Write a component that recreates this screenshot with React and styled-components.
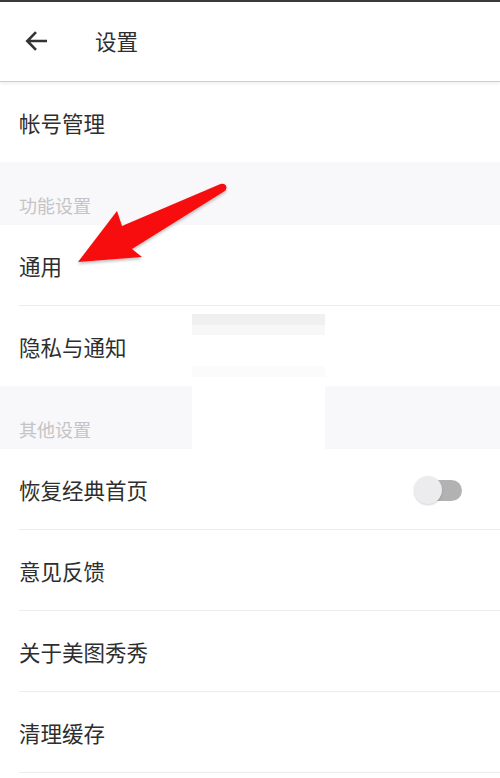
import React from "react";
import styled, { createGlobalStyle } from "styled-components";

const Global = createGlobalStyle`
  html, body { margin: 0; padding: 0; background: #ffffff; }
  body { font-family: "Noto Sans CJK SC", "Noto Sans", sans-serif; }
  * { box-sizing: border-box; }
`;

const Page = styled.div`
  position: relative;
  width: 500px;
  height: 778px;
  overflow: hidden;
  background: #ffffff;
  display: flex;
  flex-direction: column;
`;

const Header = styled.header`
  position: relative;
  z-index: 2;
  height: 82px;
  flex: none;
  display: flex;
  align-items: center;
  border-top: 2px solid #3a3a3a;
  background: #ffffff;
  border-bottom: 1px solid #cfcfcf;
  box-shadow: 0 2px 3px rgba(0, 0, 0, 0.06);
  padding-left: 24px;
`;

const BackButton = styled.button`
  border: 0;
  background: none;
  padding: 0;
  width: 26px;
  height: 26px;
  display: flex;
  align-items: center;
  justify-content: center;
  margin-right: 45px;
  margin-top: -2px;
`;

const Title = styled.h1`
  margin: 0 0 2px 0;
  font-size: 21.5px;
  font-weight: 400;
  color: #2e2e2e;
  line-height: 1;
`;

const Row = styled.div`
  height: ${(p) => (p.$divider ? 81 : 80)}px;
  flex: none;
  display: flex;
  align-items: center;
  justify-content: space-between;
  padding: 0 38px 0 0;
  margin-left: 19px;
  border-bottom: ${(p) => (p.$divider ? "1px solid #ededed" : "0")};
  font-size: 21.5px;
  color: #2e2e2e;
`;

const Section = styled.div`
  height: 63px;
  flex: none;
  background: #f8f7fa;
  display: flex;
  align-items: flex-end;
  padding: 0 0 7px 19px;
  font-size: 18px;
  color: #c4c4c6;
`;

const Toggle = styled.div`
  position: relative;
  width: 48px;
  height: 28px;
  margin-top: 2px;
  &::before {
    content: "";
    position: absolute;
    right: 0;
    top: 4px;
    width: 38px;
    height: 21px;
    border-radius: 11px;
    background: #b2b2b2;
  }
  &::after {
    content: "";
    position: absolute;
    left: 0;
    top: 0;
    width: 28px;
    height: 28px;
    border-radius: 50%;
    background: #ececee;
    box-shadow: 0 1px 2px rgba(0, 0, 0, 0.18);
  }
`;

const Patch = styled.div`
  position: absolute;
  left: 192px;
  top: 306px;
  width: 133px;
  height: 144px;
  z-index: 1;
  background: linear-gradient(
    to bottom,
    #ffffff 0px,
    #ffffff 8px,
    #f0f0f0 8px,
    #f0f0f0 19px,
    #f7f7f7 19px,
    #f7f7f7 29px,
    #ffffff 29px,
    #ffffff 60px,
    #fbfbfb 60px,
    #fbfbfb 71px,
    #ffffff 71px
  );
`;

const Arrow = styled.svg`
  position: absolute;
  left: 0;
  top: 0;
  z-index: 3;
  pointer-events: none;
`;

const items = [
  { type: "row", label: "帐号管理" },
  { type: "section", label: "功能设置" },
  { type: "row", label: "通用", divider: true },
  { type: "row", label: "隐私与通知" },
  { type: "section", label: "其他设置" },
  { type: "row", label: "恢复经典首页", divider: true, toggle: true },
  { type: "row", label: "意见反馈", divider: true },
  { type: "row", label: "关于美图秀秀", divider: true },
  { type: "row", label: "清理缓存", divider: true },
];

export default function App() {
  return (
    <>
      <Global />
      <Page>
        <Header>
          <BackButton aria-label="返回">
            <svg width="26" height="26" viewBox="0 0 26 26">
              <path
                d="M23 13H3.5M12 4.2L3.3 13L12 21.8"
                fill="none"
                stroke="#333"
                strokeWidth="2.6"
                strokeLinecap="butt"
              />
            </svg>
          </BackButton>
          <Title>设置</Title>
        </Header>
        {items.map((it, i) =>
          it.type === "section" ? (
            <Section key={i}>{it.label}</Section>
          ) : (
            <Row key={i} $divider={it.divider}>
              <span>{it.label}</span>
              {it.toggle && <Toggle />}
            </Row>
          )
        )}
        <Patch />
        <Arrow width="500" height="778" viewBox="0 0 500 778">
          <defs>
            <filter id="sh" x="-10%" y="-10%" width="120%" height="130%">
              <feDropShadow dx="0" dy="2" stdDeviation="1.5" floodColor="#000" floodOpacity="0.25" />
            </filter>
          </defs>
          <path
            d="M78 262 L117 211 L122 226 L220.5 184 Q226 183 226.5 187.5 Q226.5 190 224 191.5 L132 249 L142 257 Z"
            fill="#f70d0d"
            filter="url(#sh)"
          />
        </Arrow>
      </Page>
    </>
  );
}
